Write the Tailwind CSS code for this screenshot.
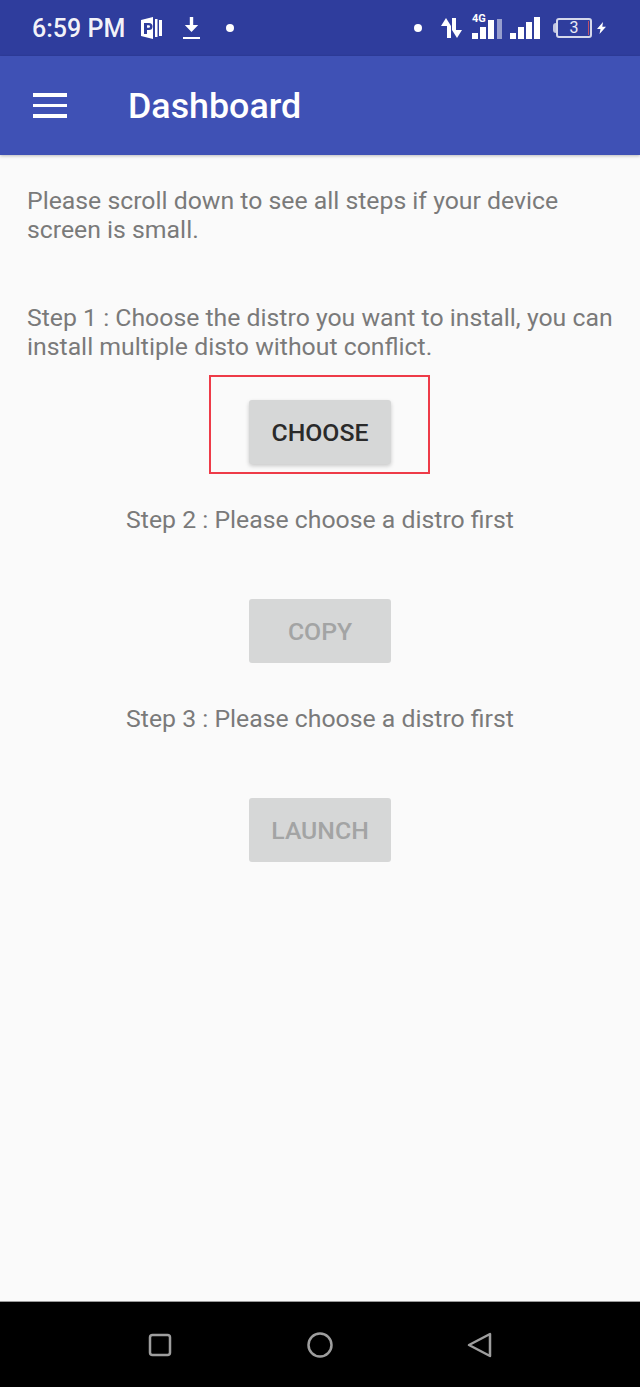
<!DOCTYPE html>
<html lang="en">
<head>
    <meta charset="UTF-8">
    <meta name="viewport" content="width=device-width, initial-scale=1.0">
    <title>Dashboard</title>
    <script src="https://cdn.jsdelivr.net/npm/@tailwindcss/browser@4"></script>
</head>
<body class="font-['Roboto',sans-serif] bg-[#fafafa]">
    <div class="relative w-[640px] h-[1387px] flex flex-col overflow-hidden">
        <!-- status bar -->
        <div class="h-[56px] bg-[#2f3d9d] flex items-center text-white shrink-0 pr-[34px]">
            <span class="ml-[32px] w-[93px] whitespace-nowrap text-[25px] font-medium leading-none text-white/95">6:59 PM</span>
            <svg class="ml-[16px]" width="22" height="22" viewBox="0 0 22 22" fill="white">
                <path d="M0 3l12-3v22L0 19z"/>
                <path d="M14 2h2.500v18H14zM18 3h3v16h-3z"/>
                <path d="M3 6h5a3.500 3.500 0 0 1 0 7H6v4H3z" fill="#2f3d9d"/>
                <path d="M6 8.300h1.800a1.200 1.200 0 0 1 0 2.400H6z" fill="white"/>
            </svg>
            <svg class="ml-[20px]" width="17" height="22" viewBox="0 0 17 22" fill="white">
                <path d="M6.800 0h3.400v8h5l-6.700 7-6.700-7h5z"/>
                <rect x="0" y="20" width="17" height="2"/>
            </svg>
            <span class="ml-[26px] w-[8px] h-[8px] rounded-full bg-white"></span>

            <span class="ml-auto w-[8px] h-[8px] rounded-full bg-white"></span>
            <svg class="ml-[19px]" width="21" height="20" viewBox="0 0 21 20" fill="white">
                <path d="M5 0L10 8V20H6V8H0z"/>
                <path d="M11 0h4v12h6l-5 8-5-8z"/>
            </svg>
            <div class="relative ml-[10px] w-[30px] h-[22px]">
                <span class="absolute left-[0px] top-[-4px] text-[11px] font-bold leading-none">4G</span>
                <span class="absolute left-0 bottom-0 w-[6px] h-[6px] bg-white"></span>
                <span class="absolute left-[8px] bottom-0 w-[6px] h-[12px] bg-white"></span>
                <span class="absolute left-[16px] bottom-0 w-[6px] h-[19px] bg-white"></span>
                <span class="absolute left-[25px] bottom-0 w-[5px] h-[20px] bg-white/50"></span>
            </div>
            <div class="ml-[8px] flex items-end gap-[2px] h-[22px]">
                <span class="w-[6px] h-[6px] bg-white"></span>
                <span class="w-[6px] h-[12px] bg-white"></span>
                <span class="w-[6px] h-[17px] bg-white"></span>
                <span class="w-[6px] h-[22px] bg-white"></span>
            </div>
            <span class="ml-[13px] w-[3px] h-[10px] bg-white/70 rounded-l-sm"></span>
            <div class="w-[36px] h-[20px] border-2 border-white/80 rounded-[3px] flex items-center justify-center relative">
                <span class="text-[16px] leading-none text-white/90">3</span>
                <span class="absolute right-[1px] top-[1px] bottom-[1px] w-[1px] bg-[#c0506a]"></span>
            </div>
            <svg class="ml-[5px]" width="9" height="12" viewBox="0 0 9 12" fill="white">
                <path d="M6 0L0 7h3.500L2.500 12 9 4.800H5.300z"/>
            </svg>
        </div>

        <!-- toolbar -->
        <div class="h-[99px] bg-[#3f51b5] flex items-center text-white shrink-0 shadow-[0_1px_3px_rgba(0,0,0,0.25)] z-10">
            <div class="ml-[33px] w-[34px] flex flex-col gap-[7px]">
                <span class="h-[3.500px] bg-white"></span>
                <span class="h-[3.500px] bg-white"></span>
                <span class="h-[3.500px] bg-white"></span>
            </div>
            <h1 class="ml-[61px] text-[35.800px] font-medium leading-none mt-[2px]">Dashboard</h1>
        </div>

        <!-- content -->
        <main class="flex-1 px-[27px] pt-[31px] text-[24.800px] leading-[29px] text-[#7a7a7a]">
            <p>Please scroll down to see all steps if your device screen is small.</p>
            <p class="mt-[59px] w-[590px]">Step 1 : Choose the distro you want to install, you can install multiple disto without conflict.</p>
            <div class="mt-[39px] flex flex-col items-center">
                <button class="w-[142px] h-[64px] rounded-[3px] bg-[#d6d7d7] text-[#2a2a2a] text-[24.800px] font-medium shadow-[0_2px_4px_rgba(0,0,0,0.2)]">CHOOSE</button>
                <p class="mt-[41px]">Step 2 : Please choose a distro first</p>
                <button class="mt-[65px] w-[142px] h-[64px] rounded-[3px] bg-[#d6d7d7] text-[#a3a4a4] text-[24.800px] font-medium">COPY</button>
                <p class="mt-[41px]">Step 3 : Please choose a distro first</p>
                <button class="mt-[65px] w-[142px] h-[64px] rounded-[3px] bg-[#d6d7d7] text-[#a3a4a4] text-[24.800px] font-medium">LAUNCH</button>
            </div>
        </main>

        <!-- highlight drawn over the screenshot -->
        <div class="absolute left-[209px] top-[375px] w-[221px] h-[99px] border-2 border-[#ee3b48]"></div>

        <!-- navigation bar -->
        <div class="h-[86px] bg-black border-t border-[#9a9a9a] shrink-0 relative flex items-center justify-between pl-[148px] pr-[147px]">
            <svg width="24" height="24" viewBox="0 0 24 24" fill="none" stroke="#9e9e9e" stroke-width="2.500"><rect x="2" y="2" width="20" height="20" rx="2.500"/></svg>
            <svg width="26" height="26" viewBox="0 0 26 26" fill="none" stroke="#9e9e9e" stroke-width="2.500"><circle cx="13" cy="13" r="11.500"/></svg>
            <svg width="26" height="26" viewBox="0 0 26 26" fill="none" stroke="#9e9e9e" stroke-width="2.500" stroke-linejoin="round"><path d="M2 13L23 2v22z"/></svg>
        </div>
    </div>
</body>
</html>
